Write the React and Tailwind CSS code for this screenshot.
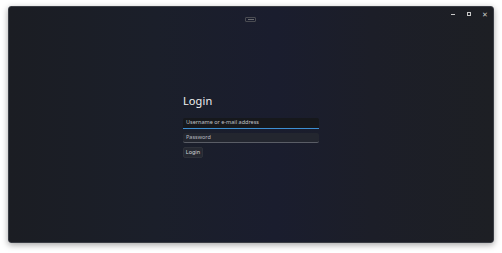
export default function App() {
  return (
    <div className="w-[502px] h-[253px] bg-white pt-[6px] pl-[8px]" style={{ fontFamily: '"Segoe UI", "Noto Sans", sans-serif' }}>
      <div className="w-[486px] h-[237px] rounded-[3px] shadow-[0_2px_6px_rgba(0,0,0,0.35)] border border-[#3a3d44] bg-[linear-gradient(90deg,#1b1d23_0%,#1b1f2a_30%,#1a1d2e_55%,#1c1e28_75%,#1d1f24_100%)] flex flex-col overflow-hidden">
        {/* Titlebar */}
        <div className="h-[26px] flex items-start relative">
          <div className="absolute left-[236px] top-[10px] w-[11px] h-[5px] rounded-[1px] border border-[#4a4c52] flex items-center justify-center">
            <div className="w-[6px] h-px bg-[#6a6c70]" />
          </div>
          <div className="ml-auto flex items-center h-[12px] mt-[1px]">
            <div className="w-[16px] flex justify-center"><div className="w-[4px] h-px bg-[#c8c8c8]" /></div>
            <div className="w-[16px] flex justify-center"><div className="w-[4px] h-[4px] border border-[#c8c8c8]" /></div>
            <div className="w-[16px] flex justify-center text-[#c8c8c8] text-[7px] leading-none">✕</div>
          </div>
        </div>
        {/* Form */}
        <div className="pl-[174px] pt-[61px] flex flex-col">
          <div className="text-[#f0f0f0] text-[11px] leading-[14px] tracking-[0.1px]">Login</div>
          <div className="mt-[10px] w-[136px] h-[11px] bg-[#16181c] rounded-t-[2px] border-b border-[#3d8fd1] flex items-center px-[3px]">
            <span className="text-[#c0c2c6] text-[5.5px] leading-none">Username or e-mail address</span>
          </div>
          <div className="mt-[4px] w-[136px] h-[10px] bg-[#23262f] rounded-[2px] border-b border-[#5a5d66] flex items-center px-[3px]">
            <span className="text-[#b8bac0] text-[5.5px] leading-none">Password</span>
          </div>
          <div className="mt-[4px] w-[20px] h-[11px] bg-[#262932] rounded-[2px] border border-[#2e313a] flex items-center justify-center">
            <span className="text-[#d8d8dc] text-[5.5px] leading-none">Login</span>
          </div>
        </div>
      </div>
    </div>
  );
}
